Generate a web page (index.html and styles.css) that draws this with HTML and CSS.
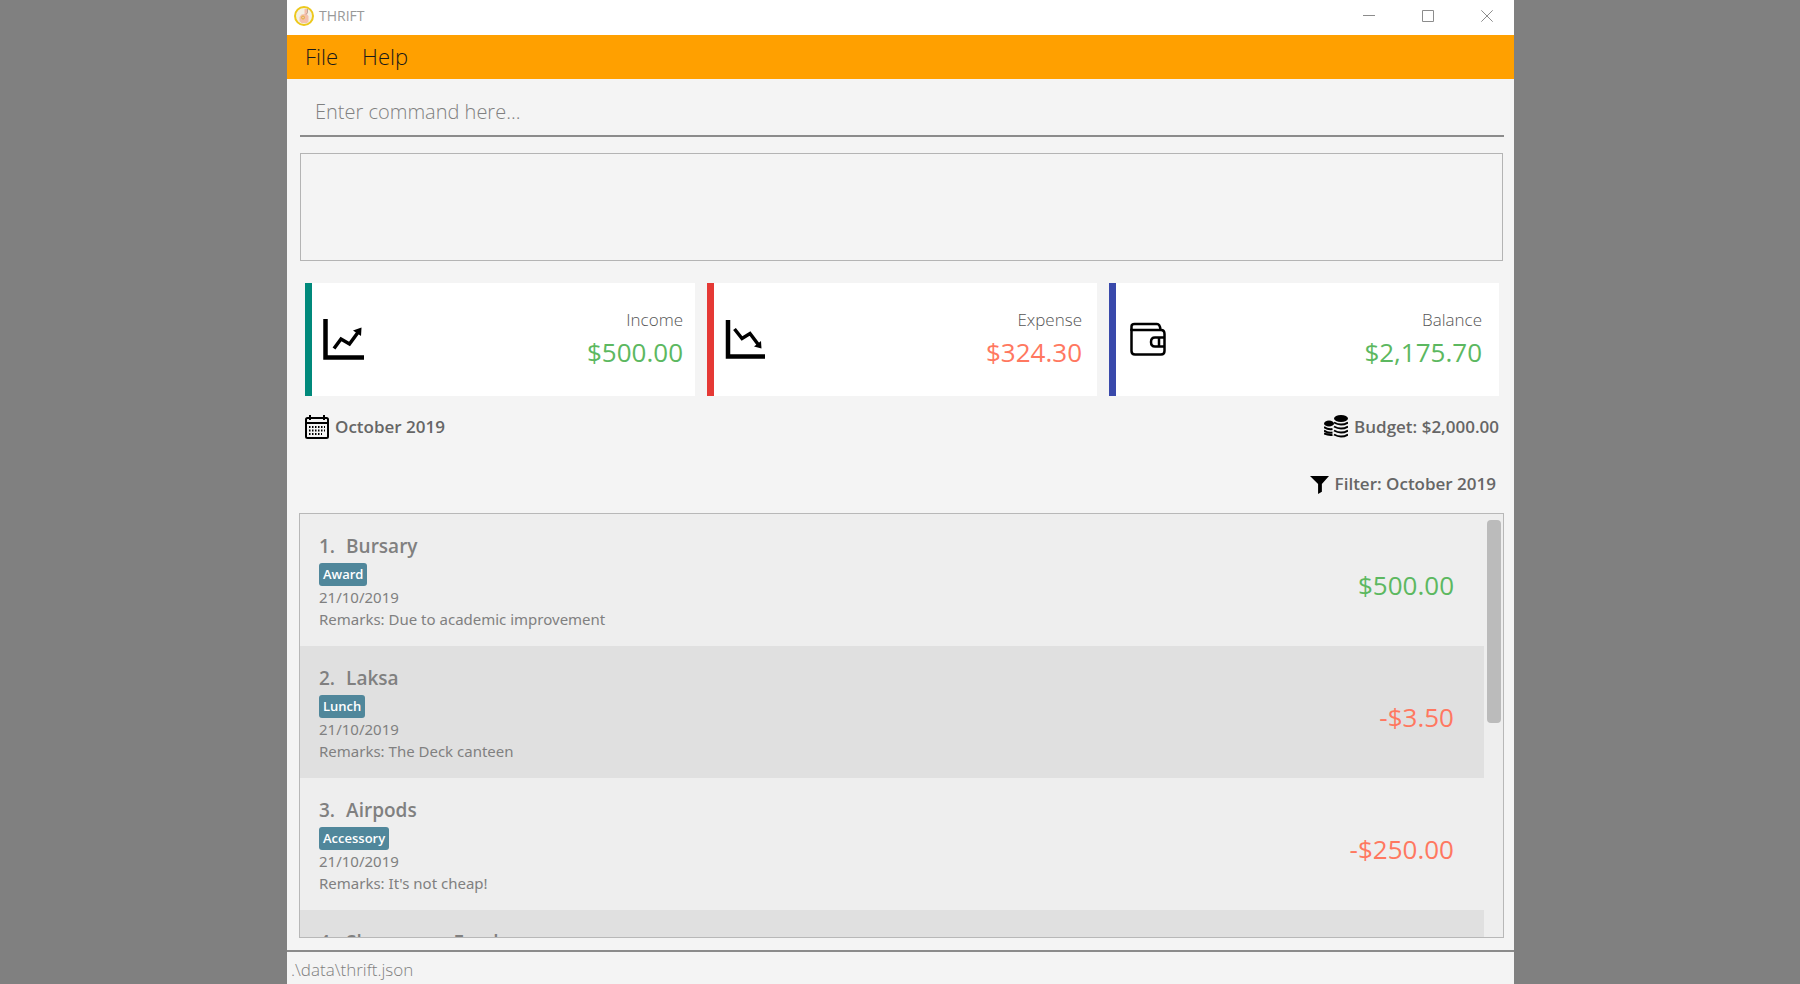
FILE: index.html
```html
<!DOCTYPE html>
<html lang="en">
<head>
<meta charset="utf-8">
<title>THRIFT</title>
<link rel="stylesheet" href="styles.css">
</head>
<body>
<div class="window">
  <header class="titlebar">
    <svg class="logo" viewBox="0 0 20 20" aria-hidden="true">
      <circle cx="10" cy="10" r="9" fill="#f4f1e4" stroke="#edc81c" stroke-width="2"/>
      <path d="M10.500 3h3.500v3.500l-1 2 1.500 1.500V15.500L13 17H7.500L5.500 15V11l2-2.500 3-.5z" fill="#f5c0ab"/>
      <circle cx="9" cy="11.500" r="1.500" fill="none" stroke="#e0b53c" stroke-width="1"/>
      <path d="M13.500 3v3.500l-1.500 2" fill="none" stroke="#a59a90" stroke-width=".7"/>
    </svg>
    <h1 class="app-name">THRIFT</h1>
    <div class="window-controls">
      <button class="window-button" aria-label="Minimize"><svg viewBox="0 0 12 12"><path d="M0 5.500h12"/></svg></button>
      <button class="window-button" aria-label="Maximize"><svg viewBox="0 0 12 12"><path d="M.5.5h11v11H.5z"/></svg></button>
      <button class="window-button" aria-label="Close"><svg viewBox="0 0 12 12"><path d="M.3.3l11.400 11.400M11.700.3L.3 11.700"/></svg></button>
    </div>
  </header>
  <nav class="menubar">
    <button class="menu">File</button>
    <button class="menu">Help</button>
  </nav>
  <main class="content">
    <input class="command" type="text" aria-label="Command" placeholder="Enter command here...">
    <div class="result" role="status"></div>
    <section class="cards">
      <article class="card card-income">
        <svg class="card-icon" viewBox="0 0 44 44" aria-hidden="true"><path d="M4.500 1v38.500H43" fill="none" stroke="#000" stroke-width="4.500"/><path d="M13 30.500l7-9.500 8.500 5 9.500-13" fill="none" stroke="#000" stroke-width="3.500"/><path d="M32 12.500l8.500-3-.5 8.500z"/></svg>
        <div class="card-text"><span class="card-label">Income</span><span class="amount gain">$500.00</span></div>
      </article>
      <article class="card card-expense">
        <svg class="card-icon" viewBox="0 0 44 44" aria-hidden="true"><path d="M5 2v36.500h37" fill="none" stroke="#000" stroke-width="4.500"/><path d="M11.500 11l7.500 9.500 8-5 9 12" fill="none" stroke="#000" stroke-width="3.500"/><path d="M31 28.500l7.500 2-.5-7.500z"/></svg>
        <div class="card-text"><span class="card-label">Expense</span><span class="amount loss">$324.30</span></div>
      </article>
      <article class="card card-balance">
        <svg class="card-icon" viewBox="0 0 44 44" aria-hidden="true"><g fill="none" stroke="#000" stroke-width="2.500"><path d="M6.500 13V8.500q0-2.500 3-2.500H32q3 0 3.500 6"/><path d="M6.500 12H36q3.500 0 3.500 4v17q0 3.500-3.500 3.500H10q-3.500 0-3.500-3.500V12z"/><path d="M39 19.500h-9q-4 0-4 4.500t4 4.500h9M34 19.500v9"/></g></svg>
        <div class="card-text"><span class="card-label">Balance</span><span class="amount gain">$2,175.70</span></div>
      </article>
    </section>
    <div class="summary">
      <p class="fact"><svg class="fact-icon" viewBox="0 0 24 24" aria-hidden="true"><g fill="none" stroke="#000" stroke-width="2"><rect x="1" y="3" width="22" height="20" rx="1.500"/><path d="M1 8h22M5 0v5M19 0v5"/><path d="M4 12h16M4 15.500h16M4 19h13" stroke-dasharray="1.500 1.500"/></g></svg>October 2019</p>
      <p class="fact"><svg class="fact-icon" viewBox="0 0 24 24" aria-hidden="true"><ellipse cx="17" cy="3.500" rx="7" ry="3.500"/><ellipse cx="5" cy="8.500" rx="5" ry="3"/><path d="M10 7.500q7 4 14 0M10 11.500q7 4 14 0M10 15.500q7 4 14 0M10 19.500q7 4 14 0M0 12q4 3 8.500 2M0 15.500q4 3 8.500 2M0 18.500q4 2 8.500 1.500" fill="none" stroke="#000" stroke-width="2"/></svg>Budget: $2,000.00</p>
    </div>
    <p class="fact filter"><svg class="filter-icon" viewBox="0 0 20 20" aria-hidden="true"><path d="M0 1h20l-7.500 8.500v8L8.500 20V9.500z"/></svg>Filter: October 2019</p>
    <div class="list-frame">
      <ol class="transactions">
        <li class="row"><div><h2 class="name"><span>1.</span><span>Bursary</span></h2><span class="tag">Award</span><p class="detail">21/10/2019</p><p class="detail">Remarks: Due to academic improvement</p></div><span class="amount gain">$500.00</span></li>
        <li class="row"><div><h2 class="name"><span>2.</span><span>Laksa</span></h2><span class="tag">Lunch</span><p class="detail">21/10/2019</p><p class="detail">Remarks: The Deck canteen</p></div><span class="amount loss">-$3.50</span></li>
        <li class="row"><div><h2 class="name"><span>3.</span><span>Airpods</span></h2><span class="tag">Accessory</span><p class="detail">21/10/2019</p><p class="detail">Remarks: It's not cheap!</p></div><span class="amount loss">-$250.00</span></li>
        <li class="row"><div><h2 class="name"><span>4.</span><span>Shampoo + Food</span></h2></div></li>
      </ol>
      <div class="scrollbar"><div class="thumb"></div></div>
    </div>
  </main>
  <footer class="statusbar">.\data\thrift.json</footer>
</div>
</body>
</html>
```

FILE: styles.css
```css
* { box-sizing: border-box; }
body {
  margin: 0;
  height: 100vh;
  background: #808080;
  font-family: "Open Sans", "Noto Sans", sans-serif;
  color: #808080;
}
h1, h2, p, ol { margin: 0; padding: 0; font-weight: inherit; }
button { border: 0; padding: 0; background: none; font: inherit; }

.window {
  display: flex;
  flex-direction: column;
  height: 100vh;
  margin: 0 286px 0 287px;
  background: #f4f4f4;
}
.titlebar {
  display: flex;
  align-items: center;
  height: 35px;
  padding: 0 21px 3px 7px;
  background: #fff;
}
.logo { width: 20px; height: 20px; margin-right: 5px; }
.app-name { font-size: 14px; line-height: 20px; color: #999; }
.window-controls { display: flex; gap: 47px; margin-left: auto; }
.window-button { display: flex; width: 12px; height: 12px; }
.window-button svg { width: 12px; height: 12px; fill: none; stroke: #8c8c8c; }

.menubar {
  display: flex;
  gap: 24px;
  height: 44px;
  padding: 0 18px 2px;
  background: #ffa000;
}
.menu { font-size: 22px; font-weight: 300; color: #1a1a1a; }

.content {
  display: flex;
  flex: 1;
  flex-direction: column;
  min-height: 0;
  padding: 11px 10px 12px 12px;
}
.command {
  flex: none;
  height: 47px;
  margin-left: 1px;
  padding: 0 15px 3px;
  border: 0;
  border-bottom: 2px solid #8b8b8b;
  background: transparent;
  font: 300 20px "Open Sans", "Noto Sans", sans-serif;
  color: #444;
}
.command::placeholder { color: #808080; opacity: 1; }
.result { flex: none; height: 108px; margin: 16px 1px 0; border: 1px solid #b4b4b4; }

.cards {
  display: grid;
  grid-template-columns: repeat(3, 1fr);
  gap: 12px;
  margin: 22px 5px 0 6px;
}
.card {
  display: flex;
  align-items: center;
  height: 113px;
  padding: 0 12px 0 9px;
  border-left: 7px solid;
  background: #fff;
}
.card-income { border-color: #00897b; }
.card-expense { padding-right: 15px; border-color: #e53935; }
.card-balance { padding-right: 17px; border-color: #3949ab; }
.card-icon { width: 44px; height: 44px; }
.card-text { display: flex; flex-direction: column; margin-left: auto; text-align: right; }
.card-label { font-size: 17px; font-weight: 300; line-height: 24px; color: #555; }
.amount { font-size: 26px; line-height: 40px; }
.gain { color: #5cb860; }
.loss { color: #ff7860; }

.summary { display: flex; justify-content: space-between; margin: 18px 5px 0 6px; }
.fact { display: flex; align-items: center; gap: 6px; font-size: 17px; font-weight: 600; line-height: 26px; color: #666; }
.fact-icon { width: 24px; height: 24px; }
.filter { align-self: flex-end; margin: 31px 8px 16px 0; }
.filter-icon { width: 19px; height: 19px; }

.list-frame {
  display: flex;
  flex: 1;
  min-height: 0;
  border: 1px solid #b8b8b8;
  background: #eee;
}
.transactions { flex: 1; overflow: hidden; list-style: none; }
.row {
  display: flex;
  align-items: flex-start;
  justify-content: space-between;
  height: 132px;
  padding: 18px 30px 8px 19px;
}
.row:nth-child(even) { background: #e0e0e0; }
.row .amount { align-self: center; }
.name { display: flex; gap: 11px; font-size: 19px; font-weight: 600; line-height: 28px; }
.tag {
  display: block;
  width: fit-content;
  height: 23px;
  margin: 3px 0 0;
  padding: 0 4px;
  border-radius: 3px;
  background: #50879b;
  font-size: 13px;
  font-weight: 600;
  line-height: 22px;
  color: #fff;
}
.detail { font-family: "Noto Sans", "Open Sans", sans-serif; font-size: 15px; line-height: 22px; }
.scrollbar { width: 19px; padding: 6px 2px 0 3px; }
.thumb { height: 203px; border-radius: 4px; background: #bbb; }

.statusbar { height: 34px; padding: 4px; border-top: 2px solid #8b8b8b; font-size: 17px; font-weight: 300; line-height: 28px; }
```
